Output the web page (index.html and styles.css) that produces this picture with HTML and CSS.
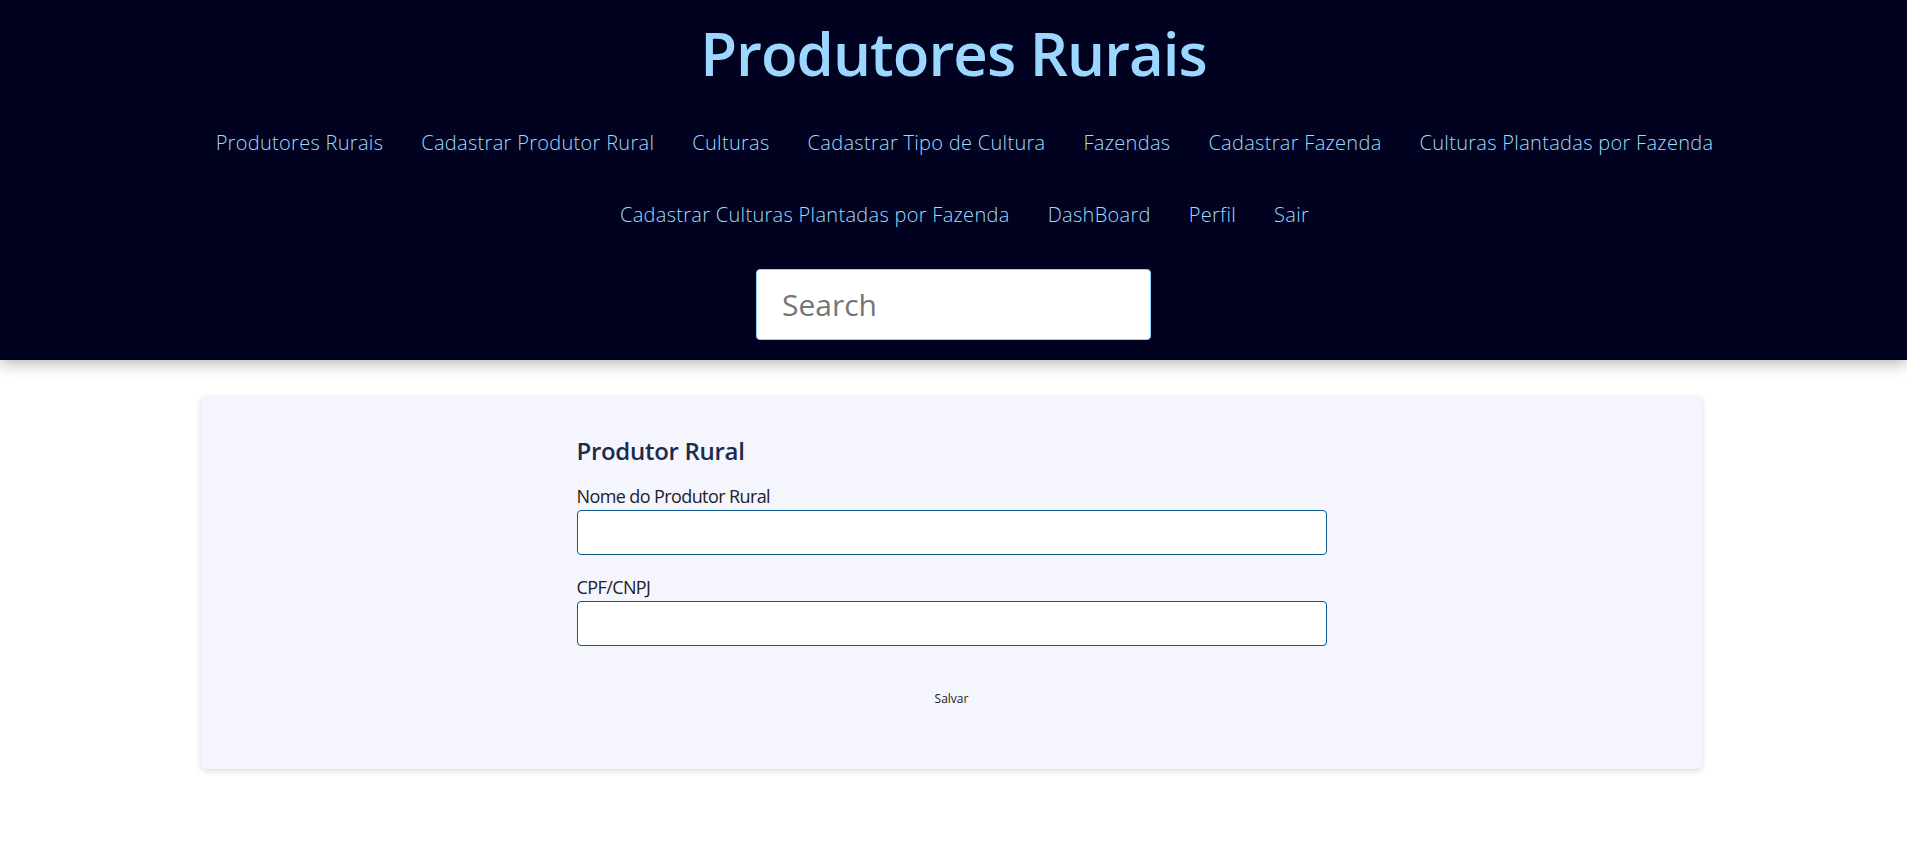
FILE: index.html
```html
<!DOCTYPE html>
<html lang="pt-BR">
<head>
<meta charset="utf-8">
<title>Produtores Rurais</title>
<link rel="stylesheet" href="styles.css">
</head>
<body>
<header class="topbar">
  <h1 class="brand">Produtores Rurais</h1>
  <nav class="menu">
    <a href="#">Produtores Rurais</a>
    <a href="#">Cadastrar Produtor Rural</a>
    <a href="#">Culturas</a>
    <a href="#">Cadastrar Tipo de Cultura</a>
    <a href="#">Fazendas</a>
    <a href="#">Cadastrar Fazenda</a>
    <a href="#">Culturas Plantadas por Fazenda</a>
    <a href="#">Cadastrar Culturas Plantadas por Fazenda</a>
    <a href="#">DashBoard</a>
    <a href="#">Perfil</a>
    <a href="#">Sair</a>
  </nav>
  <div class="search-row">
    <input class="search" type="text" placeholder="Search">
  </div>
</header>
<main class="page">
  <section class="card">
    <form class="form">
      <h2 class="form-title">Produtor Rural</h2>
      <label class="label" for="nome">Nome do Produtor Rural</label>
      <input class="field" id="nome" type="text">
      <label class="label label-gap" for="doc">CPF/CNPJ</label>
      <input class="field" id="doc" type="text">
      <div class="actions">
        <button class="save" type="button">Salvar</button>
      </div>
    </form>
  </section>
</main>
</body>
</html>
```
FILE: styles.css
```css
* { box-sizing: border-box; }
html, body { margin: 0; padding: 0; background: #ffffff; }
body { font-family: "Open Sans", "Noto Sans", sans-serif; color: #222; }

.topbar {
  background: #00021f;
  padding: 17px 0 20px;
  box-shadow: 0 4px 14px rgba(0, 0, 0, 0.28);
  position: relative;
}
.brand {
  margin: 0;
  text-align: center;
  font-size: 60px;
  line-height: 72px;
  font-weight: 600;
  color: #9bd7ff;
  letter-spacing: -1px;
}
.menu {
  max-width: 1582px;
  margin: 42px auto 0;
  padding-left: 22px;
  display: flex;
  flex-wrap: wrap;
  justify-content: center;
  column-gap: 38px;
  row-gap: 48px;
}
.menu a {
  font-size: 20px;
  line-height: 24px;
  font-weight: 300;
  color: #9edbff;
  text-decoration: none;
  letter-spacing: 0.3px;
}
.search-row {
  margin-top: 42px;
  display: flex;
  justify-content: center;
}
.search {
  width: 395px;
  height: 71px;
  border: 1px solid #8fd3fd;
  border-radius: 4px;
  background: #fff;
  padding: 0 25px;
  font-family: inherit;
  font-size: 30px;
  outline: none;
}
.search::placeholder { color: #757575; }

.page { padding: 36px 0 40px 201px; }
.card {
  width: 1501px;
  background: #f4f5fd;
  border-radius: 5px;
  box-shadow: 0 2px 6px rgba(0, 0, 0, 0.15);
  padding: 39px 0 62px;
}
.form {
  width: 750px;
  margin: 0 auto;
  display: flex;
  flex-direction: column;
}
.form-title {
  margin: 0 0 17px;
  font-size: 24px;
  line-height: 32px;
  font-weight: 600;
  color: #1b2b4b;
  letter-spacing: -0.3px;
}
.label {
  font-size: 18px;
  line-height: 24px;
  color: #222;
  margin-bottom: 2px;
  letter-spacing: -0.6px;
}
.label-gap { margin-top: 20px; }
.field {
  height: 45px;
  border: 1px solid #0b5a8c;
  border-radius: 4px;
  background: #fff;
  font-family: inherit;
  font-size: 16px;
  padding: 0 10px;
  outline: none;
}
.actions {
  margin-top: 45px;
  display: flex;
  justify-content: center;
}
.save {
  background: transparent;
  border: 0;
  padding: 0;
  font-family: inherit;
  font-size: 12px;
  line-height: 16px;
  color: #222;
  cursor: pointer;
}
```
